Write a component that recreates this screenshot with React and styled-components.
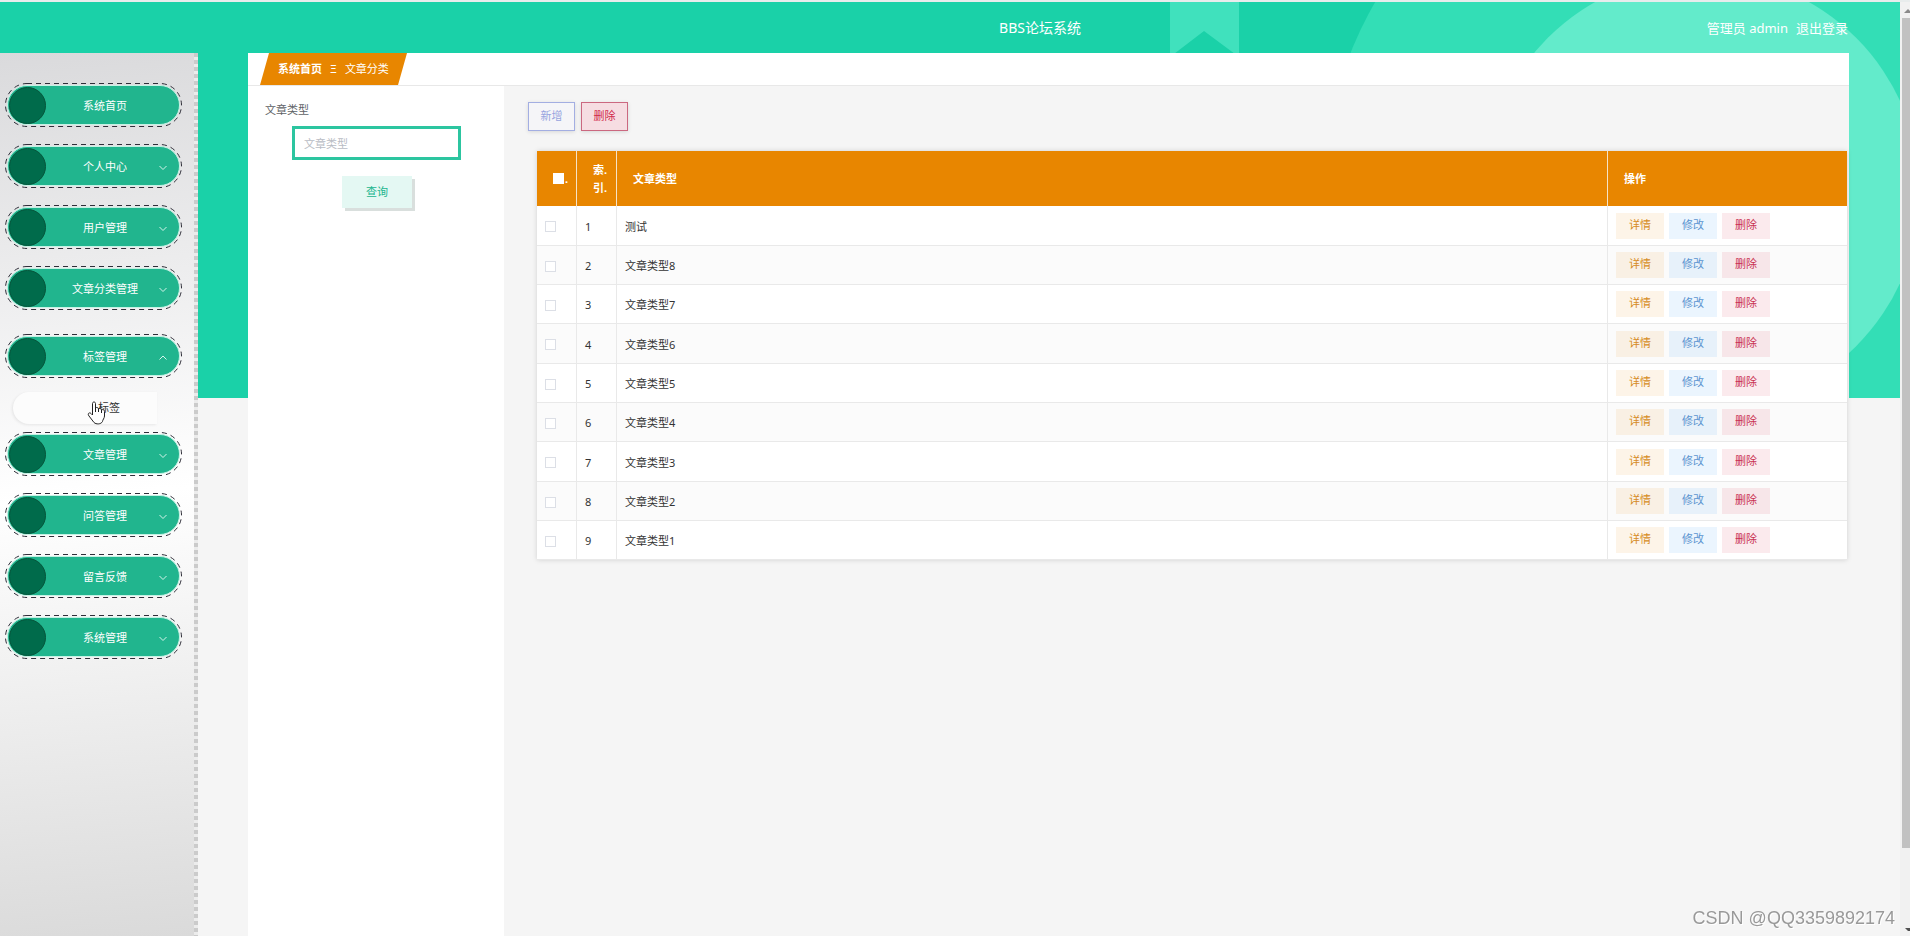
import React, { useState } from 'react';
import styled, { createGlobalStyle } from 'styled-components';

const MENU = [
    { name: '系统首页' },
    { name: '个人中心', children: ['个人信息'] },
    { name: '用户管理', children: ['用户'] },
    { name: '文章分类管理', children: ['文章分类'] },
    { name: '标签管理', children: ['标签'] },
    { name: '文章管理', children: ['文章'] },
    { name: '问答管理', children: ['问答'] },
    { name: '留言反馈', children: ['留言'] },
    { name: '系统管理', children: ['系统'] },
]

const ROWS = ['测试', '文章类型8', '文章类型7', '文章类型6', '文章类型5', '文章类型4', '文章类型3', '文章类型2', '文章类型1']

const Arrow = ({ up }) => (
    <ArrowIcon viewBox="0 0 10 10" aria-hidden="true">
        <path d={up ? 'M1.5 6.5 L5 3 L8.5 6.5' : 'M1.5 3 L5 6.5 L8.5 3'} />
    </ArrowIcon>
)

const Sidebar = () => {
    const [open, setOpen] = useState('标签管理')

    return (
        <SidebarStyle>
            {MENU.map((item) => {
                const isOpen = open === item.name
                return (
                    <MenuItem key={item.name} $open={isOpen}>
                        <MenuButton type="button" onClick={() => setOpen(isOpen ? '' : item.name)}>
                            <Stitch viewBox="0 0 177 44" aria-hidden="true">
                                <rect x=".5" y=".5" width="176" height="43" rx="21.5" />
                            </Stitch>
                            {item.name}
                            {item.children && <Arrow up={isOpen} />}
                        </MenuButton>
                        {isOpen && item.children && item.children.map((child) => (
                            <SubLink href="#" key={child}>
                                {child}
                                <Hand viewBox="0 0 20 24" aria-hidden="true">
                                    <path d="M5.5 14 V2.500 C5.500 .5 8.500 .5 8.500 2.500 V7 C9.500 6 11.500 6.500 11.500 8 C12.500 7 14.500 7.500 14.500 9 C16 8 17.500 9 17.500 10.500 V15 C17.500 17 15.500 19 15.500 20.500 C14 23.500 9 23.500 7 21.500 L2 15 C0 12.500 2.500 11 4 12.500 Z" />
                                    <path d="M8.500 7 V11 M11.500 8 V11 M14.500 9 V12" />
                                </Hand>
                            </SubLink>
                        ))}
                    </MenuItem>
                )
            })}
        </SidebarStyle>
    )
}

const App = () => {
    const [checked, setChecked] = useState([])

    const toggle = (row) => {
        setChecked(checked.includes(row) ? checked.filter((r) => r !== row) : [...checked, row])
    }

    return (
        <Screen>
            <GlobalStyle />
            <Page>
                <Banner>
                    <BannerArt viewBox="0 0 730 396" aria-hidden="true">
                        <circle cx="532" cy="190" r="378" fill="#33deb6" />
                        <circle cx="532" cy="190" r="218" fill="#63ebcb" />
                        <path d="M0 0 H69 V55 L34 29 L0 55 Z" fill="#40e1bd" />
                    </BannerArt>
                </Banner>
                <Header>
                    <Title>BBS论坛系统</Title>
                    <User>
                        <span>管理员 admin</span>
                        <a href="#">退出登录</a>
                    </User>
                </Header>
                <Body>
                    <Sidebar />
                    <Main>
                        <CrumbBar>
                            <Crumb>
                                <b>系统首页</b>
                                <span>Ξ</span>
                                <span>文章分类</span>
                            </Crumb>
                        </CrumbBar>
                        <Columns>
                            <Search>
                                <label htmlFor="type">文章类型</label>
                                <SearchInput id="type" placeholder="文章类型" />
                                <SearchButton type="button">查询</SearchButton>
                            </Search>
                            <Content>
                                <Tools>
                                    <ToolButton type="button">新增</ToolButton>
                                    <ToolButton type="button" $danger>删除</ToolButton>
                                </Tools>
                                <Table>
                                    <colgroup>
                                        <Col $w={40} />
                                        <Col $w={40} />
                                        <col />
                                        <Col $w={239} />
                                    </colgroup>
                                    <thead>
                                        <tr>
                                            <Th>
                                                <CheckAll>
                                                    <Check
                                                        $head
                                                        type="checkbox"
                                                        aria-label="全选"
                                                        checked={checked.length === ROWS.length}
                                                        onChange={(e) => setChecked(e.target.checked ? ROWS : [])}
                                                    />
                                                    .
                                                </CheckAll>
                                            </Th>
                                            <Th>索.<br />引.</Th>
                                            <Th>文章类型</Th>
                                            <Th>操作</Th>
                                        </tr>
                                    </thead>
                                    <tbody>
                                        {ROWS.map((row, i) => (
                                            <Tr key={row}>
                                                <Td>
                                                    <Check
                                                        type="checkbox"
                                                        aria-label={row}
                                                        checked={checked.includes(row)}
                                                        onChange={() => toggle(row)}
                                                    />
                                                </Td>
                                                <Td>{i + 1}</Td>
                                                <Td>{row}</Td>
                                                <Td>
                                                    <Actions>
                                                        <Action type="button" $color="#d68b22" $bg="232, 134, 0">详情</Action>
                                                        <Action type="button" $color="#5b94d0" $bg="30, 144, 240">修改</Action>
                                                        <Action type="button" $color="#c93050" $bg="210, 20, 50">删除</Action>
                                                    </Actions>
                                                </Td>
                                            </Tr>
                                        ))}
                                    </tbody>
                                </Table>
                            </Content>
                        </Columns>
                    </Main>
                </Body>
            </Page>
            <Scrollbar>
                <ScrollArrow viewBox="0 0 8 16" aria-hidden="true">
                    <path d="M2 11 L6 7 L8 9 V11 Z" fill="#8a8a8a" />
                </ScrollArrow>
                <Thumb />
                <ScrollArrow viewBox="0 0 8 16" aria-hidden="true">
                    <path d="M3 8 H8 V11 L6 11 Z" fill="#505050" />
                </ScrollArrow>
            </Scrollbar>
            <Watermark>CSDN @QQ3359892174</Watermark>
        </Screen>
    )
}

const GlobalStyle = createGlobalStyle`
    * {
        box-sizing: border-box;
    }
    body {
        margin: 0;
        background: #f5f5f5;
        color: #333;
        font: 11px/18px "Noto Sans", "Noto Sans CJK SC", sans-serif;
    }
    button, input {
        font: inherit;
    }
    a {
        color: inherit;
        text-decoration: none;
    }
`

const Screen = styled.div`
    display: flex;
    min-height: 100vh;
    border-top: 2px solid #e8ecec;
`

const Page = styled.div`
    position: relative;
    flex: 1;
    display: flex;
    flex-direction: column;
`

const Banner = styled.div`
    position: absolute;
    inset: 0 0 auto;
    height: 396px;
    background: #1ad1a8;
    overflow: hidden;
`

const BannerArt = styled.svg`
    position: absolute;
    top: 0;
    right: 0;
    width: 730px;
    height: 396px;
`

const Header = styled.header`
    position: relative;
    display: grid;
    grid-template-columns: 1fr auto 1fr;
    align-items: center;
    height: 51px;
    padding: 0 52px 0 232px;
    color: #fff;
    font-size: 13px;
`

const Title = styled.h1`
    grid-column: 2;
    margin: 0;
    font-size: 14px;
    font-weight: 400;
`

const User = styled.div`
    display: flex;
    justify-content: flex-end;
    gap: 8px;
`

const Body = styled.div`
    position: relative;
    flex: 1;
    display: flex;
`

const SidebarStyle = styled.nav`
    width: 198px;
    padding: 30px 16px 30px 5px;
    background:
        repeating-linear-gradient(#cbcbcb 0 4px, #ececec 4px 7px) right / 4px 100% no-repeat,
        linear-gradient(175deg, #dadadc 0%, #fff 50%, #dadada 100%);
`

const MenuItem = styled.div`
    margin: ${(props) => (props.$open ? '24px 0 0' : '0 0 17px')};
`

const MenuButton = styled.button`
    position: relative;
    display: block;
    width: 177px;
    height: 44px;
    padding: 2px 0 0 23px;
    border: 0;
    border-radius: 22px;
    background: transparent;
    color: #fff;
    text-align: center;
    cursor: pointer;
    isolation: isolate;

    &::before {
        content: '';
        position: absolute;
        z-index: -1;
        inset: 2px;
        border: 1px solid #c4f2e4;
        border-radius: 20px;
        background: #21b58e;
    }
    &::after {
        content: '';
        position: absolute;
        z-index: -1;
        left: 4px;
        top: 4px;
        width: 35px;
        height: 35px;
        border: 1px solid #06553b;
        border-radius: 50%;
        background: #006b4b;
    }
`

const Stitch = styled.svg`
    position: absolute;
    inset: 0;
    width: 177px;
    height: 44px;
    fill: none;
    stroke: #2e2e38;
    stroke-dasharray: 5 4;
`

const ArrowIcon = styled.svg`
    position: absolute;
    right: 14px;
    top: 19px;
    width: 10px;
    height: 10px;
    fill: none;
    stroke: #d4f4ea;
    stroke-width: 1;
`

const SubLink = styled.a`
    position: relative;
    display: block;
    width: 144px;
    height: 32px;
    margin: 14px 0 8px 8px;
    padding-left: 48px;
    border-radius: 16px 0 0 16px;
    background: #fcfcfc;
    box-shadow: -1px 1px 3px rgba(0, 0, 0, 0.08);
    line-height: 32px;
    text-align: center;
`

const Hand = styled.svg`
    position: absolute;
    left: 74px;
    top: 9px;
    width: 20px;
    height: 24px;
    fill: #fff;
    stroke: #222;
    stroke-width: 1;
`

const Main = styled.main`
    flex: 1;
    display: flex;
    flex-direction: column;
    margin: 0 51px 0 50px;
    background: #f5f5f5;
`

const CrumbBar = styled.div`
    height: 33px;
    padding-left: 12px;
    border-bottom: 1px solid #e8e8e8;
    background: #fff;
`

const Crumb = styled.div`
    display: flex;
    align-items: center;
    gap: 8px;
    width: 147px;
    height: 32px;
    padding-left: 18px;
    background: #e88600;
    clip-path: polygon(9px 0, 100% 0, calc(100% - 9px) 100%, 0 100%);
    color: #fff;
`

const Columns = styled.div`
    flex: 1;
    display: flex;
`

const Search = styled.form`
    display: flex;
    flex-direction: column;
    width: 256px;
    padding: 15px 17px;
    background: #fff;
    color: #606266;
`

const SearchInput = styled.input`
    width: 169px;
    height: 34px;
    margin: 7px 0 16px 27px;
    padding: 0 9px;
    border: 3px solid #2cc5a0;
    background: #fff;
    outline: none;

    &::placeholder {
        color: #b9bcc4;
    }
`

const SearchButton = styled.button`
    width: 70px;
    height: 32px;
    margin-left: 77px;
    border: 0;
    background: #e4f8f3;
    box-shadow: 3px 3px 0 #d9dfdd;
    color: #21b58e;
`

const Content = styled.section`
    flex: 1;
    padding: 16px 2px 0 24px;
`

const Tools = styled.div`
    display: flex;
    gap: 6px;
    margin-bottom: 20px;
`

const ToolButton = styled.button`
    width: 47px;
    height: 29px;
    padding: 0 0 2px;
    border: 1px solid ${(props) => (props.$danger ? '#cb6880' : '#a3aee2')};
    background: ${(props) => (props.$danger ? '#f6dde2' : '#f5f5f8')};
    box-shadow: 0 1px 4px rgba(0, 0, 0, 0.12);
    color: ${(props) => (props.$danger ? '#d1274b' : '#98a4df')};
`

const Table = styled.table`
    width: calc(100% - 9px);
    margin-left: 9px;
    table-layout: fixed;
    border-collapse: separate;
    border-spacing: 0;
    box-shadow: 0 0 5px rgba(0, 0, 0, 0.15);
`

const Col = styled.col`
    width: ${(props) => props.$w}px;
`

const Th = styled.th`
    height: 55px;
    padding: 0 0 0 16px;
    border-right: 1px solid #f6e3c6;
    background: #e88600;
    color: #fff;
    text-align: left;

    &:last-child {
        border-right: 0;
    }
`

const CheckAll = styled.span`
    display: flex;
    align-items: center;
    gap: 1px;
`

const Check = styled.input`
    appearance: none;
    display: block;
    width: 11px;
    height: 11px;
    margin: 0;
    border: 1px solid ${(props) => (props.$head ? '#fff' : '#dcdfe6')};
    background: #fff;

    &:checked {
        background: #21b58e;
    }
`

const Td = styled.td`
    height: 39px;
    padding: 2px 8px 0;
    border: solid #e9e9e9;
    border-width: 0 1px 1px 0;

    &:last-child {
        padding-top: 0;
        border-right: 0;
    }
`

const Tr = styled.tr`
    background: #fff;

    &:nth-child(even) {
        background: #fbfbfb;
    }
    &:nth-child(3n + 1) ${Td} {
        height: 40px;
    }
`

const Actions = styled.div`
    display: flex;
    gap: 5px;
`

const Action = styled.button`
    width: 48px;
    height: 26px;
    padding: 0 0 2px;
    border: 0;
    background: rgba(${(props) => props.$bg}, 0.09);
    color: ${(props) => props.$color};
`

const Scrollbar = styled.div`
    display: flex;
    flex-direction: column;
    width: 10px;
    padding-left: 2px;
    background: #f1f1f1;
`

const ScrollArrow = styled.svg`
    width: 8px;
    height: 16px;
`

const Thumb = styled.div`
    height: 830px;
    margin-bottom: auto;
    background: #c1c1c1;
`

const Watermark = styled.div`
    position: fixed;
    right: 15px;
    bottom: 8px;
    color: #999;
    font: 18px/20px "Liberation Sans", sans-serif;
    text-shadow: 1px 1px 0 #fff;
`

export default App;
